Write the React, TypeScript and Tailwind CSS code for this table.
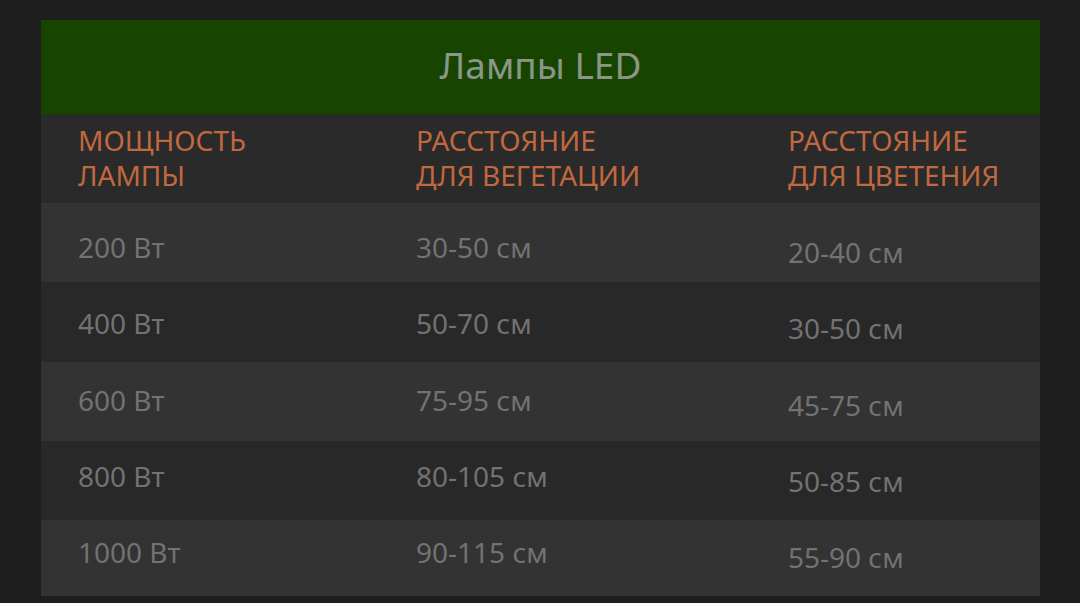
const ROWS = [
  { cells: ["200 Вт", "30-50 см", "20-40 см"], h: "h-[79px]", pt: "pt-[26px]", pt3: "pt-[31px]" },
  { cells: ["400 Вт", "50-70 см", "30-50 см"], h: "h-[80px]", pt: "pt-[23px]", pt3: "pt-[28px]" },
  { cells: ["600 Вт", "75-95 см", "45-75 см"], h: "h-[79px]", pt: "pt-[20px]", pt3: "pt-[25px]" },
  { cells: ["800 Вт", "80-105 см", "50-85 см"], h: "h-[79px]", pt: "pt-[17px]", pt3: "pt-[22px]" },
  { cells: ["1000 Вт", "90-115 см", "55-90 см"], h: "h-[76px]", pt: "pt-[14px]", pt3: "pt-[19px]" },
];

export default function App() {
  return (
    <div className="w-[1080px] h-[603px] bg-[#1e1e1e] pt-5 pl-[41px]" style={{ fontFamily: "'Noto Sans', 'Open Sans', sans-serif" }}>
      <div className="w-[999px]">
        <div className="h-[94px] pb-1 bg-[#174500] flex items-center justify-center text-[#8a968a] text-[37px]">
          Лампы LED
        </div>

        <div className="grid grid-cols-[338px_372px_1fr] bg-[#2a2a2a] h-[89px] pt-[9px] text-[#c0683f] text-[28px] leading-[35px]">
          <div className="pl-[37px]">МОЩНОСТЬ<br />ЛАМПЫ</div>
          <div className="pl-[37px]">РАССТОЯНИЕ<br />ДЛЯ ВЕГЕТАЦИИ</div>
          <div className="pl-[37px]">РАССТОЯНИЕ<br />ДЛЯ ЦВЕТЕНИЯ</div>
        </div>

        {ROWS.map((r, i) => (
          <div
            key={r.cells[0]}
            className={
              "grid grid-cols-[338px_372px_1fr] text-[#727272] text-[28px] leading-[36px] " +
              (i % 2 === 0 ? "bg-[#333333] " : "bg-[#282828] ") +
              r.h
            }
          >
            <div className={"pl-[37px] " + r.pt}>{r.cells[0]}</div>
            <div className={"pl-[37px] " + r.pt}>{r.cells[1]}</div>
            <div className={"pl-[37px] " + r.pt3}>{r.cells[2]}</div>
          </div>
        ))}
      </div>
    </div>
  );
}
